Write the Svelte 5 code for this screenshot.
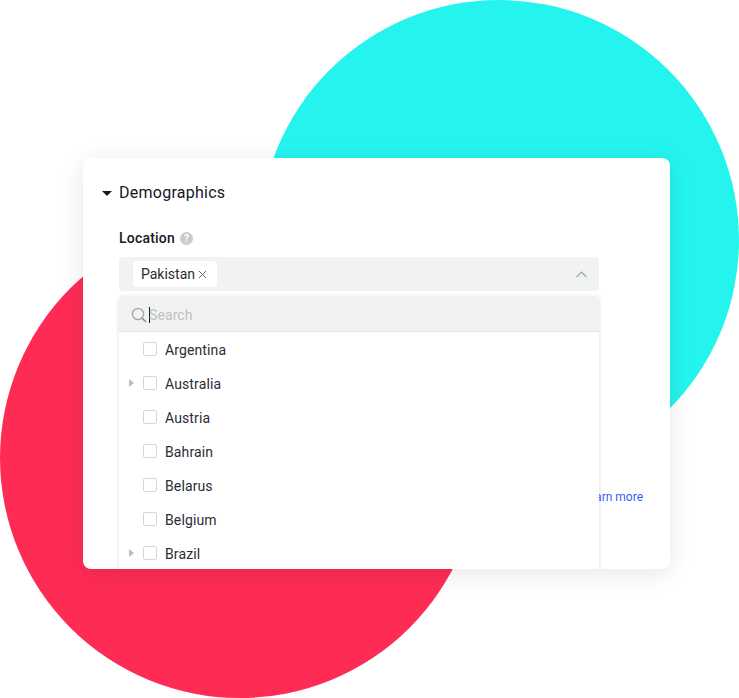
<script>
  const countries = [
    { name: 'Argentina', kids: false },
    { name: 'Australia', kids: true },
    { name: 'Austria', kids: false },
    { name: 'Bahrain', kids: false },
    { name: 'Belarus', kids: false },
    { name: 'Belgium', kids: false },
    { name: 'Brazil', kids: true }
  ];
</script>

<div class="stage">
  <div class="circle cyan"></div>
  <div class="circle red"></div>
  <section class="card">
    <h2 class="head"><span class="caret"></span>Demographics</h2>
    <div class="body">
      <div class="label">Location <span class="help">?</span></div>
      <div class="select">
        <span class="tag">Pakistan
          <svg class="x" width="9" height="9" viewBox="0 0 9 9"><path d="M1 1l7 7M8 1L1 8" stroke="#6b6f74" stroke-width="1" fill="none"/></svg>
        </span>
        <svg class="chev" width="11" height="7" viewBox="0 0 11 7"><path d="M.5 6L5.500 1l5 5" stroke="#a0a4a6" stroke-width="1.1" fill="none"/></svg>
      </div>
      <div class="drop">
        <div class="search">
          <svg class="mag" width="16" height="16" viewBox="0 0 16 16"><circle cx="7" cy="7" r="5.6" stroke="#a8aaac" stroke-width="1.5" fill="none"/><path d="M11 11l4 4" stroke="#8f9194" stroke-width="1.7" fill="none"/></svg>
          <span class="cursor"></span><span class="ph">Search</span>
        </div>
        <ul class="list">
          {#each countries as c}
            <li class="row">
              <span class="arrow-slot">{#if c.kids}<span class="arrow"></span>{/if}</span>
              <span class="box"></span>
              <span class="name">{c.name}</span>
            </li>
          {/each}
        </ul>
      </div>
    </div>
    <a class="more" href="#more">Learn more</a>
  </section>
</div>

<style>
  :global(body) { margin: 0; background: #fff; }
  .stage { position: relative; width: 739px; height: 698px; overflow: hidden; padding: 158px 69px 129px 83px; box-sizing: border-box; font-family: Roboto, sans-serif; color: #161823; }
  .circle { position: absolute; width: 480px; height: 480px; border-radius: 50%; }
  .cyan { right: 0; top: 0; background: #25f4ee; }
  .red { left: 0; bottom: 0; background: #fe2c55; }
  .card { position: relative; height: 411px; background: #fff; border-radius: 8px; box-shadow: 0 4px 24px rgba(0,0,0,.1); overflow: hidden; }
  .head { display: flex; align-items: center; margin: 0; padding: 25px 0 0 19px; font-size: 16px; font-weight: 400; line-height: 20px; letter-spacing: .25px; }
  .caret { width: 0; height: 0; border-left: 5px solid transparent; border-right: 5px solid transparent; border-top: 5.500px solid #161823; margin-right: 7px; }
  .body { position: relative; z-index: 1; box-sizing: border-box; width: 516px; padding: 25px 0 0 36px; }
  .label { display: flex; align-items: center; gap: 5px; font-size: 14px; font-weight: 500; line-height: 20px; letter-spacing: .2px; }
  .help { width: 13px; height: 13px; border-radius: 50%; background: #c9cbcc; color: #fff; font-size: 10px; line-height: 13px; text-align: center; font-weight: 700; letter-spacing: 0; }
  .select { display: flex; align-items: center; justify-content: space-between; box-sizing: border-box; height: 34px; margin-top: 9px; padding: 0 12px 0 14px; background: #f1f2f2; border-radius: 4px; }
  .tag { display: flex; align-items: center; gap: 3px; height: 26px; padding: 0 10px 0 8px; background: #fff; border-radius: 3px; font-size: 14px; color: #2a2d35; }
  .drop { margin-top: 6px; box-shadow: 0 0 4px rgba(0,0,0,.14); border-radius: 4px 4px 0 0; height: 300px; background: #fff; }
  .search { display: flex; align-items: center; box-sizing: border-box; height: 35px; padding: 1px 0 0 12px; background: #f1f2f2; border-bottom: 1px solid #e3e3e4; border-radius: 4px 4px 0 0; }
  .mag { margin-right: 2px; }
  .cursor { width: 1px; height: 16px; background: #161823; margin-right: -1px; }
  .ph { font-size: 14px; color: #bfc0c2; letter-spacing: .1px; }
  .list { list-style: none; margin: 0; padding: 1px 0 0; }
  .row { display: flex; align-items: center; height: 34px; font-size: 14px; color: #2a2d35; letter-spacing: .12px; }
  .arrow-slot { width: 24px; padding-left: 10px; box-sizing: border-box; display: flex; }
  .arrow { width: 0; height: 0; border-top: 4px solid transparent; border-bottom: 4px solid transparent; border-left: 5px solid #bdbdbd; margin-top: -3px; }
  .box { width: 12px; height: 12px; border: 1px solid #d6d6d8; border-radius: 2px; margin-right: 8px; margin-top: -2px; }
  .more { position: absolute; right: 27px; top: 332px; font-size: 12px; line-height: 14px; color: #3a5cf5; text-decoration: none; z-index: 0; }
</style>
